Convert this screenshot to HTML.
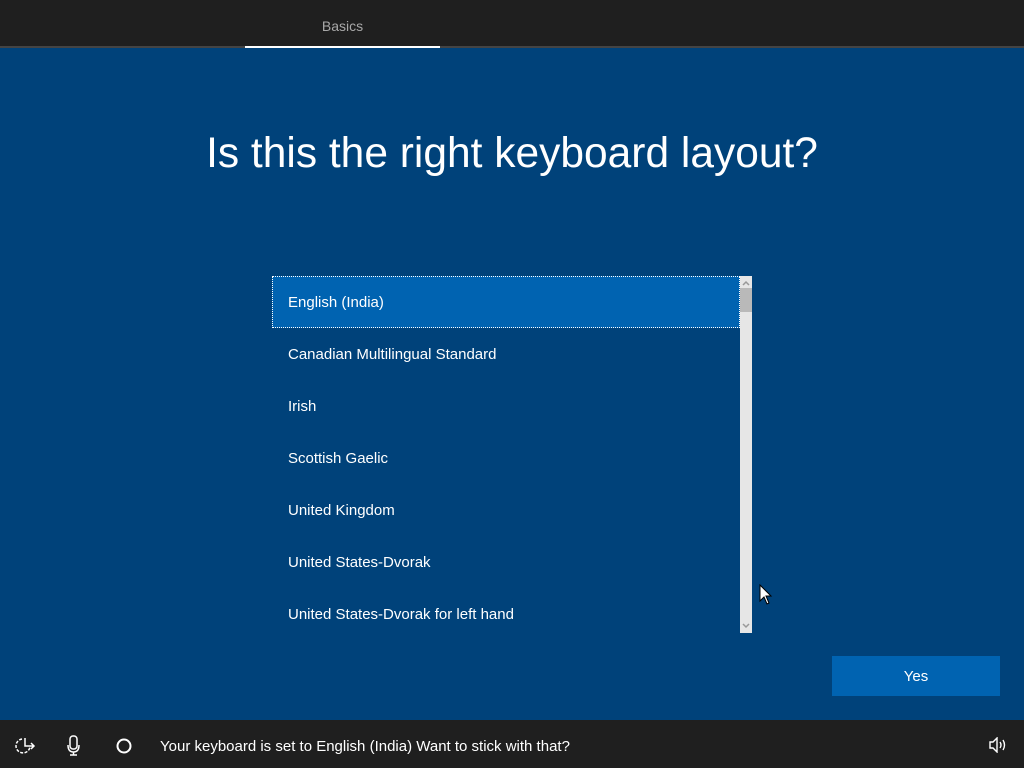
<!DOCTYPE html>
<html><head><meta charset="utf-8"><style>
*{margin:0;padding:0;box-sizing:border-box}
body{width:1024px;height:768px;overflow:hidden;background:#00427a;font-family:"Liberation Sans",sans-serif;position:relative;color:#fff}
.top{position:absolute;left:0;top:0;width:1024px;height:46px;background:#1f1f1f}
.topline{position:absolute;left:0;top:46px;width:1024px;height:2px;background:#444}
.tabline{position:absolute;left:245px;top:46px;width:195px;height:2px;background:#fff}
.tab{position:absolute;left:245px;width:195px;top:18px;text-align:center;font-size:14px;color:#a8a8a8}
h1{position:absolute;top:130px;left:0;width:1024px;text-align:center;font-weight:normal;font-size:42.5px;color:#fff;font-family:"Liberation Sans",sans-serif}
.list{position:absolute;left:272px;top:276px;width:468px;height:357px;overflow:hidden}
.item{height:52px;line-height:54px;padding-left:16px;font-size:15px}
.sel{background:#0063b1;outline:1px dotted #fff;outline-offset:-1px}
.sb{position:absolute;left:740px;top:276px;width:12px;height:357px;background:#e6e6e6}
.thumb{position:absolute;left:740px;top:288px;width:12px;height:24px;background:#b9b9b9}
.yes{position:absolute;left:832px;top:656px;width:168px;height:40px;background:#0063b1;text-align:center;line-height:42px;font-size:15px}
.bot{position:absolute;left:0;top:720px;width:1024px;height:48px;background:#1f1f1f}
.msg{position:absolute;left:160px;top:738px;font-size:15px}
</style></head><body>
<div class="top"></div><div class="topline"></div><div class="tabline"></div>
<div class="tab">Basics</div>
<h1>Is this the right keyboard layout?</h1>
<div class="list">
<div class="item sel">English (India)</div>
<div class="item">Canadian Multilingual Standard</div>
<div class="item">Irish</div>
<div class="item">Scottish Gaelic</div>
<div class="item">United Kingdom</div>
<div class="item">United States-Dvorak</div>
<div class="item">United States-Dvorak for left hand</div>
</div>
<div class="sb"></div><div class="thumb"></div>
<svg style="position:absolute;left:740px;top:279px" width="12" height="8"><path d="M3 6 L6 3 L9 6" stroke="#999" stroke-width="1.5" fill="none"/></svg>
<svg style="position:absolute;left:740px;top:622px" width="12" height="8"><path d="M3 2 L6 5 L9 2" stroke="#999" stroke-width="1.5" fill="none"/></svg>
<svg style="position:absolute;left:758px;top:584px" width="16" height="22"><path d="M2 1 L2 17 L6 13 L9 20 L11 19 L8 12 L13 12 Z" fill="#fff" stroke="#000" stroke-width="1"/></svg>
<div class="yes">Yes</div>
<div class="bot"></div>
<svg style="position:absolute;left:14px;top:736px" width="24" height="20"><path d="M8 3 A7 7 0 1 0 16 10" stroke="#fff" stroke-width="1.5" fill="none" stroke-dasharray="3 1.5"/><path d="M11 2 V10 H20 M17 7 L20 10 L17 13" stroke="#fff" stroke-width="1.5" fill="none"/></svg>
<svg style="position:absolute;left:66px;top:735px" width="16" height="22"><rect x="4" y="1" width="7" height="13" rx="3" stroke="#fff" stroke-width="1.5" fill="none"/><path d="M2 10 Q2 17 7.5 17 Q13 17 13 10 M7.5 17 V20 M4 20 H11" stroke="#fff" stroke-width="1.5" fill="none"/></svg>
<svg style="position:absolute;left:115px;top:737px" width="18" height="18"><circle cx="9" cy="9" r="6.5" stroke="#fff" stroke-width="2" fill="none"/></svg>
<div class="msg">Your keyboard is set to English (India) Want to stick with that?</div>
<svg style="position:absolute;left:988px;top:737px" width="20" height="16"><path d="M2 5 H5 L9 1 V15 L5 11 H2 Z" stroke="#fff" stroke-width="1.4" fill="none"/><path d="M12 5 Q14 8 12 11 M15 3 Q18 8 15 13" stroke="#fff" stroke-width="1.4" fill="none"/></svg>
</body></html>
